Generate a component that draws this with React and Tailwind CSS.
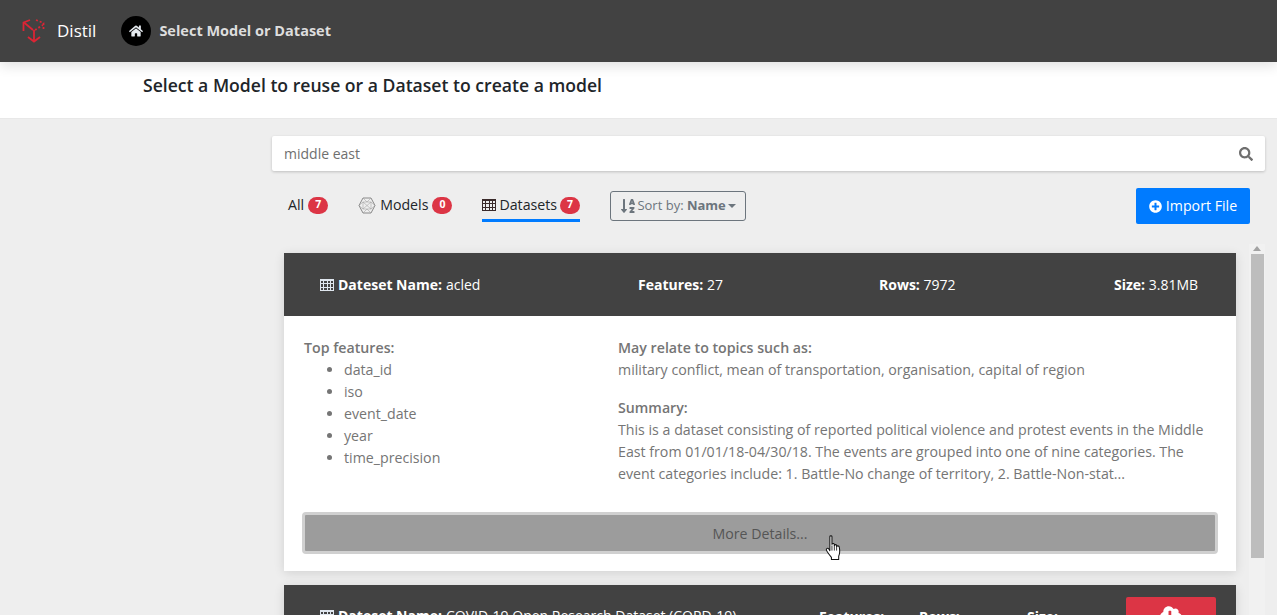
import { FaHome, FaSearch, FaPlusCircle, FaSortAlphaDown, FaCloudDownloadAlt } from 'react-icons/fa'

// ── Logo: dotted cube with red arrows ─────────────────────────────────────────
function Logo() {
  return (
    <svg width="24" height="26" viewBox="0 0 24 26" fill="none" stroke="#dc2535" strokeWidth="1.8">
      <path d="M1.5 13 V4.5 L8 2" />
      <path d="M2 4.5 L11 12" />
      <path d="M14 2 L21.5 5 V13" strokeDasharray="2 2" />
      <path d="M13 12 L21 7" strokeDasharray="2 2" />
      <path d="M12 12 V23" />
      <path d="M6 19 L12 23.5 L18 19" />
    </svg>
  )
}

function ModelIcon() {
  return (
    <svg width="18" height="17" viewBox="0 0 18 17" fill="none" stroke="#6f6f6f" strokeWidth="0.8">
      <path d="M5 1 H13 L17 8.5 L13 16 H5 L1 8.5 Z" />
      <path d="M5 1 L9 5 L13 1 M1 8.5 L5 5 L9 5 L13 5 L17 8.5 M1 8.5 L5 12 H13 L17 8.5 M5 16 L9 12 L13 16 M5 5 V12 M13 5 V12 M5 5 L13 12 M13 5 L5 12" stroke="#a5a5a5" strokeWidth="0.6" />
    </svg>
  )
}

// Grid table icon, 4 columns by 3 rows under a filled head
function TableIcon({ color }) {
  return (
    <svg width="14" height="12" viewBox="0 0 14 12" fill="none" stroke={color} strokeWidth="1" shapeRendering="crispEdges">
      <rect x="0.5" y="0.5" width="13" height="11" />
      <path d="M0 1.5 H14 M0 4.5 H14 M0 8 H14 M3.5 1 V12 M7 1 V12 M10.5 1 V12" />
    </svg>
  )
}

function HandCursor() {
  return (
    <svg className="absolute left-[825px] top-[535px]" width="17" height="26" viewBox="0 0 15 25">
      <path d="M4 1.5 C4 0.6 6 0.6 6 1.5 V9 C6.5 8 8 8 8.3 9 V10 C8.8 9 10.2 9 10.5 10 V11 C11 10.2 12.7 10.2 13 11.5 C13.5 14 13.7 18 12.5 20.5 V23.5 H5.5 V21.5 C3.5 19 1.5 16.5 0.7 14.5 C0.2 13 2 12 3 13.5 L4 15 Z" fill="#fff" stroke="#111" strokeWidth="1" strokeLinejoin="round" />
      <path d="M6 10 V15 M8.3 10 V15 M10.5 11 V15" stroke="#111" strokeWidth="0.8" />
    </svg>
  )
}

function Badge({ children }) {
  return (
    <span className="inline-flex items-center justify-center w-[20px] h-[17px] rounded-full bg-[#dc3545] text-white text-[10.5px] font-bold">
      {children}
    </span>
  )
}

function CardHeader({ name, features, rows, size }) {
  return (
    <div className="flex items-center h-[63px] bg-[#424242] text-white text-[14px] shrink-0">
      <div className="w-[354px] pl-[36px] flex items-center whitespace-nowrap">
        <span className="mr-[4px]"><TableIcon color="#dfe6ee" /></span>
        <b className="font-bold mr-[4px]">Dateset Name:</b>{name}
      </div>
      <div className="w-[241px] whitespace-nowrap"><b>Features:</b> {features}</div>
      <div className="w-[235px] whitespace-nowrap"><b>Rows:</b> {rows}</div>
      <div className="whitespace-nowrap"><b>Size:</b> {size}</div>
    </div>
  )
}

export default function App() {
  return (
    <div className="relative h-[615px] overflow-hidden bg-[#eeeeee] text-[14.2px] text-[#757575]" style={{ fontFamily: '"Open Sans", "Noto Sans", sans-serif' }}>
      {/* Top bar */}
      <div className="relative z-10 h-[62px] bg-[#424242] flex items-center shadow-[0_4px_12px_rgba(0,0,0,0.12)]">
        <div className="ml-[22px] w-[24px] h-[26px]"><Logo /></div>
        <span className="ml-[11px] text-white text-[17px]">Distil</span>
        <div className="ml-[25px] w-[30px] h-[30px] rounded-full bg-black flex items-center justify-center">
          <FaHome className="text-[#e6ebf0] text-[14px]" />
        </div>
        <span className="ml-[8px] text-[#dddddd] text-[14.5px] font-bold">Select Model or Dataset</span>
      </div>

      {/* Title band */}
      <div className="h-[57px] bg-white pl-[143px] pt-[10px] text-[#212529] text-[17.6px] font-semibold leading-[26px] border-b border-[#e8e8e8]">
        Select a Model to reuse or a Dataset to create a model
      </div>

      <div className="ml-[272px] pt-[17px]">
        {/* Search */}
        <div className="mr-[12px] h-[35px] bg-white shadow-[0_1px_3px_rgba(0,0,0,0.2)] flex items-center justify-between pl-[12px] pr-[12px] rounded-[2px]">
          <span className="text-[14px] text-[#6f6f6f]">middle east</span>
          <FaSearch className="text-[14px] text-[#6f6f6f]" />
        </div>

        {/* Tabs */}
        <div className="mr-[12px] flex items-start h-[65px] mt-[17px] text-[#212529]">
          <div className="flex items-center gap-[4px] ml-[16px] mt-[3px] h-[28px]">All <Badge>7</Badge></div>
          <div className="flex items-center gap-[4px] ml-[30px] mt-[3px] h-[28px]"><ModelIcon /> Models <Badge>0</Badge></div>
          <div className="flex items-center gap-[3px] ml-[30px] mt-[3px] h-[31px] border-b-[3px] border-[#007bff]">
            <TableIcon color="#3a2a2a" /> Datasets <Badge>7</Badge>
          </div>
          <div className="ml-[30px] mt-[3px] w-[136px] h-[30px] border border-[#6c757d] rounded-[3px] flex items-center justify-center text-[13px] text-[#6c757d]">
            <FaSortAlphaDown className="text-[16px] mr-[1px]" />
            Sort by:&nbsp;<b>Name</b>
            <span className="ml-[2px] border-x-[4px] border-x-transparent border-t-[4px] border-t-[#6c757d]" />
          </div>
          <div className="ml-auto mr-[15px] w-[114px] h-[36px] bg-[#007bff] rounded-[2px] text-white flex items-center justify-center gap-[4px]">
            <FaPlusCircle className="text-[13px]" /> Import File
          </div>
        </div>

        {/* List + scrollbar */}
        <div className="flex pl-[12px]">
          <div className="w-[952px] shrink-0">
            <div className="bg-white h-[318px] flex flex-col shadow-[0_2px_10px_rgba(0,0,0,0.12)]">
              <CardHeader name="acled" features="27" rows="7972" size="3.81MB" />
              <div className="flex pl-[20px] pt-[21px] leading-[22px]">
                <div className="w-[314px]">
                  <b className="font-semibold">Top features:</b>
                  <ul className="list-disc pl-[40px]">
                    <li>data_id</li>
                    <li>iso</li>
                    <li>event_date</li>
                    <li>year</li>
                    <li>time_precision</li>
                  </ul>
                </div>
                <div className="w-[596px]">
                  <b className="font-semibold">May relate to topics such as:</b>
                  <p>military conflict, mean of transportation, organisation, capital of region</p>
                  <b className="font-semibold block mt-[16px]">Summary:</b>
                  <p>This is a dataset consisting of reported political violence and protest events in the Middle East from 01/01/18-04/30/18. The events are grouped into one of nine categories. The event categories include: 1. Battle-No change of territory, 2. Battle-Non-stat...</p>
                </div>
              </div>
              <div className="mx-[18px] mt-[27px] h-[42px] pt-[1px] rounded-[4px] bg-[#9c9c9c] border-[3px] border-[#d0d0d0] flex items-center justify-center text-[#555555]">
                More Details...
              </div>
            </div>

            <div className="bg-white mt-[14px] shadow-[0_2px_10px_rgba(0,0,0,0.12)]">
              <div className="relative flex items-center h-[63px] bg-[#424242] text-white text-[14px]">
                <div className="w-[535px] pl-[36px] flex items-center whitespace-nowrap pb-[2px]">
                  <span className="mr-[4px]"><TableIcon color="#dfe6ee" /></span>
                  <b className="font-bold mr-[4px]">Dateset Name:</b>COVID-19 Open Research Dataset (CORD-19)
                </div>
                <b className="w-[100px]">Features:</b>
                <b className="w-[108px]">Rows:</b>
                <b>Size:</b>
                <div className="absolute right-[20px] top-[12px] w-[90px] h-[40px] bg-[#dc3545] rounded-[2px] flex justify-center pt-[6px]">
                  <FaCloudDownloadAlt className="text-[22px] text-white" />
                </div>
              </div>
            </div>
          </div>

          {/* Scrollbar */}
          <div className="ml-[13px] w-[16px] -mt-[9px] h-[380px] bg-[#f1f1f1] flex flex-col items-center">
            <span className="mt-[2px] border-x-[4px] border-x-transparent border-b-[5px] border-b-[#a3a3a3]" />
            <div className="w-[13px] h-[304px] mt-[3px] bg-[#bdbdbd]" />
          </div>
        </div>
      </div>

      <HandCursor />
    </div>
  )
}
